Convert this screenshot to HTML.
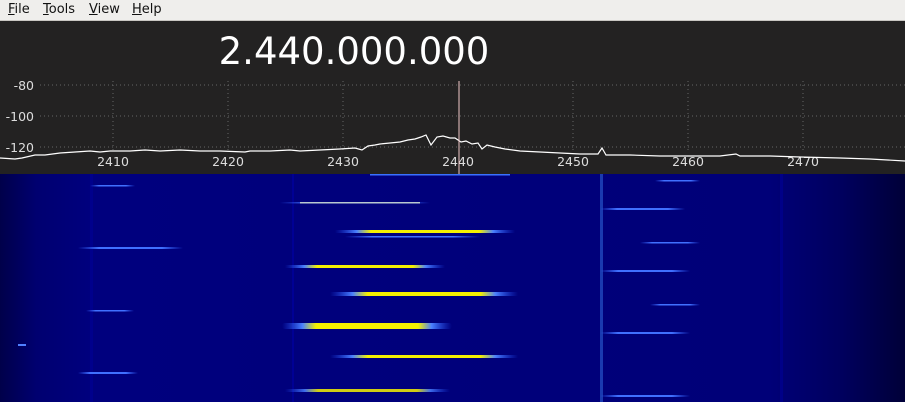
<!DOCTYPE html>
<html><head><style>
body{margin:0;width:905px;height:402px;overflow:hidden;background:#232222;font-family:"DejaVu Sans","Liberation Sans",sans-serif}
.menu{position:absolute;left:0;top:0;width:905px;height:20px;background:#efeeec;border-bottom:1px solid #c8c6c2;font-size:13px;color:#111}
.menu span{position:absolute;top:2px}
.menu u{text-decoration:underline}
</style></head><body>
<div class="menu"><span style="left:8px"><u>F</u>ile</span><span style="left:43px"><u>T</u>ools</span><span style="left:89px"><u>V</u>iew</span><span style="left:132px"><u>H</u>elp</span></div>
<svg width="905" height="402" style="position:absolute;left:0;top:0" xmlns="http://www.w3.org/2000/svg">
<defs>
<linearGradient id="bg" x1="0" x2="1" y1="0" y2="0">
<stop offset="0" stop-color="#00004a"/><stop offset="0.04" stop-color="#000070"/><stop offset="0.1" stop-color="#00007e"/><stop offset="0.85" stop-color="#000078"/><stop offset="0.93" stop-color="#00005e"/><stop offset="1" stop-color="#000038"/>
</linearGradient>
<linearGradient id="y" x1="0" x2="1"><stop offset="0" stop-color="#2050ff" stop-opacity="0"/><stop offset="0.12" stop-color="#4a80ff"/><stop offset="0.2" stop-color="#f5f000"/><stop offset="0.8" stop-color="#f5f000"/><stop offset="0.88" stop-color="#4a80ff"/><stop offset="1" stop-color="#2050ff" stop-opacity="0"/></linearGradient>
<linearGradient id="b" x1="0" x2="1"><stop offset="0" stop-color="#3060ff" stop-opacity="0"/><stop offset="0.2" stop-color="#4070ff"/><stop offset="0.8" stop-color="#4070ff"/><stop offset="1" stop-color="#3060ff" stop-opacity="0"/></linearGradient>
</defs>
<rect x="0" y="21" width="905" height="153" fill="#232222"/>
<text x="354" y="64" fill="#fff" font-size="37" text-anchor="middle" font-family="DejaVu Sans">2.440.000.000</text>
<g stroke="#666" stroke-dasharray="1,3" stroke-width="1">
<line x1="40" y1="85" x2="905" y2="85"/><line x1="40" y1="116" x2="905" y2="116"/><line x1="40" y1="147" x2="905" y2="147"/>
<line x1="113" y1="81" x2="113" y2="150"/><line x1="228" y1="81" x2="228" y2="150"/><line x1="343" y1="81" x2="343" y2="150"/><line x1="573" y1="81" x2="573" y2="150"/><line x1="688" y1="81" x2="688" y2="150"/><line x1="803" y1="81" x2="803" y2="150"/>
</g>
<g fill="#ddd" font-size="12.5" font-family="DejaVu Sans">
<text x="34" y="90" text-anchor="end">-80</text><text x="34" y="121" text-anchor="end">-100</text><text x="34" y="152" text-anchor="end">-120</text>
<text x="113" y="166" text-anchor="middle">2410</text><text x="228" y="166" text-anchor="middle">2420</text><text x="343" y="166" text-anchor="middle">2430</text><text x="458" y="166" text-anchor="middle">2440</text><text x="573" y="166" text-anchor="middle">2450</text><text x="688" y="166" text-anchor="middle">2460</text><text x="803" y="166" text-anchor="middle">2470</text>
</g>
<polyline fill="none" stroke="#fff" stroke-width="1.2" points="0,158 15,159 22,158 35,155 45,155 60,153 75,152 90,151 100,152 110,151 130,151 145,150 160,151 180,150 200,151 220,151 245,152 250,151 270,151 290,150 300,151 320,150 340,149 355,148 362,150 368,146 375,145 380,144 390,143 400,142 408,140 415,139 421,137 426,135 431,145 437,137 443,136 450,138 455,138 461,142 466,141 472,144 478,143 482,149 487,145 495,147 505,149 520,151 540,152 560,153 580,154 598,154 602,148 606,155 630,155 660,156 690,156 720,156 736,154 740,156 770,156 800,157 840,158 870,159 905,161"/>
<line x1="459" y1="81" x2="459" y2="174" stroke="#f0c8c8" stroke-width="1"/>
<rect x="0" y="174" width="905" height="228" fill="url(#bg)"/>
<rect x="600" y="174" width="3" height="228" fill="#1a3ab0"/>
<rect x="292" y="174" width="2" height="228" fill="#000094"/>
<rect x="90" y="174" width="3" height="228" fill="#00008c"/>
<rect x="780" y="174" width="3" height="228" fill="#000088"/>
<rect x="370" y="174" width="140" height="1.5" fill="#3a70ff"/>
<rect x="280" y="202" width="150" height="1.5" fill="url(#b)"/><rect x="300" y="202" width="120" height="1.5" fill="#b8c8d0"/>
<rect x="335" y="230" width="180" height="3" fill="url(#y)"/>
<rect x="345" y="236" width="135" height="1.5" fill="url(#b)"/>
<rect x="285" y="265" width="160" height="3" fill="url(#y)"/>
<rect x="330" y="292" width="188" height="4" fill="url(#y)"/>
<rect x="282" y="323" width="170" height="6" rx="3" fill="url(#y)"/>
<rect x="330" y="355" width="188" height="3" fill="url(#y)"/>
<rect x="285" y="389" width="165" height="3" fill="url(#y)" opacity="0.85"/>
<g fill="url(#b)">
<rect x="600" y="208" width="85" height="2"/><rect x="600" y="270" width="90" height="2"/><rect x="600" y="332" width="90" height="2"/><rect x="600" y="395" width="90" height="2"/>
<rect x="90" y="185" width="45" height="1.5"/><rect x="78" y="247" width="105" height="2"/><rect x="78" y="372" width="60" height="2"/><rect x="86" y="310" width="48" height="1.5"/>
<rect x="655" y="180" width="45" height="1.5"/><rect x="640" y="242" width="60" height="1.5"/><rect x="650" y="304" width="50" height="1.5"/>
</g>
<rect x="18" y="344" width="8" height="2" fill="#5080ff"/>
</svg>
</body></html>
